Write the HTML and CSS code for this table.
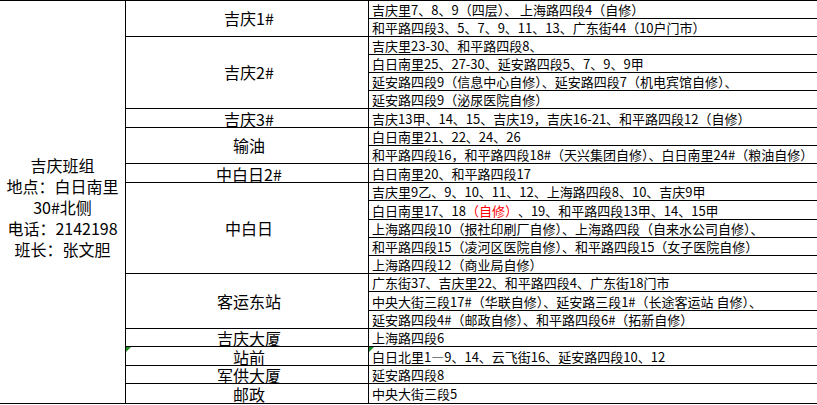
FILE: index.html
```html
<!DOCTYPE html>
<html lang="zh-CN">
<head>
<meta charset="utf-8">
<title>吉庆班组</title>
<link rel="stylesheet" href="styles.css">
</head>
<body>
<div class="sheet">
  <div class="cell group s22">
    <div class="group-text">
      <div>吉庆班组</div>
      <div>地点：白日南里</div>
      <div>30#北侧</div>
      <div>电话：2142198</div>
      <div>班长：张文胆</div>
    </div>
  </div>

  <div class="cell area s2">吉庆1#</div>
  <div class="cell area s4">吉庆2#</div>
  <div class="cell area one">吉庆3#</div>
  <div class="cell area s2">输油</div>
  <div class="cell area one">中白日2#</div>
  <div class="cell area s5">中白日</div>
  <div class="cell area s3">客运东站</div>
  <div class="cell area one">吉庆大厦</div>
  <div class="cell area one flagged"><span class="flag"></span>站前</div>
  <div class="cell area one">军供大厦</div>
  <div class="cell area one">邮政</div>

  <div class="cell addr">吉庆里7、8、9（四层）、 上海路四段4（自修）</div>
  <div class="cell addr">和平路四段3、5、7、9、11、13、广东街44（10户门市）</div>
  <div class="cell addr">吉庆里23-30、和平路四段8、</div>
  <div class="cell addr">白日南里25、27-30、延安路四段5、7、9、9甲</div>
  <div class="cell addr">延安路四段9（信息中心自修）、延安路四段7（机电宾馆自修）、</div>
  <div class="cell addr">延安路四段9（泌尿医院自修）</div>
  <div class="cell addr">吉庆13甲、14、15、吉庆19，吉庆16-21、和平路四段12（自修）</div>
  <div class="cell addr">白日南里21、22、24、26</div>
  <div class="cell addr">和平路四段16，和平路四段18#（天兴集团自修）、白日南里24#（粮油自修）</div>
  <div class="cell addr">白日南里20、和平路四段17</div>
  <div class="cell addr">吉庆里9乙、9、10、11、12、上海路四段8、10、吉庆9甲</div>
  <div class="cell addr">白日南里17、18<span class="red">（自修）</span>、19、和平路四段13甲、14、15甲</div>
  <div class="cell addr">上海路四段10（报社印刷厂自修）、上海路四段（自来水公司自修）、</div>
  <div class="cell addr">和平路四段15（凌河区医院自修）、和平路四段15（女子医院自修）</div>
  <div class="cell addr">上海路四段12（商业局自修）</div>
  <div class="cell addr">广东街37、吉庆里22、和平路四段4、广东街18门市</div>
  <div class="cell addr">中央大街三段17#（华联自修）、延安路三段1#（长途客运站 自修）、</div>
  <div class="cell addr">延安路四段4#（邮政自修）、和平路四段6#（拓新自修）</div>
  <div class="cell addr">上海路四段6</div>
  <div class="cell addr flagged"><span class="flag"></span>白日北里1—9、14、云飞街16、延安路四段10、12</div>
  <div class="cell addr">延安路四段8</div>
  <div class="cell addr">中央大街三段5</div>
</div>
</body>
</html>
```
FILE: styles.css
```css
html, body {
  margin: 0;
  padding: 0;
  background: #ffffff;
}
body {
  font-family: "Noto Sans CJK SC", "Noto Sans", sans-serif;
  color: #000000;
  overflow: hidden;
}
.sheet {
  width: 817px;
  display: grid;
  grid-auto-flow: column;
  grid-template-columns: 126px 243px 448px;
  grid-template-rows: 18px 18px 18px 18px 18px 18px 19px 18px 18px 19px 18px 19px 18px 18px 18px 18px 19px 18px 18px 19px 18px 20px;
  border-top: 1px solid #000;
}
.cell {
  box-sizing: border-box;
  border-right: 1px solid #000;
  border-bottom: 1px solid #000;
  white-space: nowrap;
  min-width: 0;
  position: relative;
}
.s2 { grid-row: span 2; }
.s3 { grid-row: span 3; }
.s4 { grid-row: span 4; }
.s5 { grid-row: span 5; }
.s22 { grid-row: span 22; }

.group {
  display: flex;
  align-items: center;
  justify-content: center;
  padding-top: 10px;
}
.group-text {
  font-size: 16px;
  line-height: 21px;
  text-align: center;
}
.area {
  display: flex;
  align-items: center;
  justify-content: center;
  font-size: 16px;
  line-height: 17px;
  padding-left: 4px;
}
.area.one {
  padding-top: 2px;
}
.addr {
  border-right: none;
  display: flex;
  align-items: center;
  font-size: 13px;
  line-height: 17px;
  padding-left: 3px;
  overflow: visible;
}
.red {
  color: #ff0000;
}
.flag {
  position: absolute;
  left: 0;
  top: 0;
  width: 0;
  height: 0;
  border-top: 5px solid #1e8c1e;
  border-right: 5px solid transparent;
}
```
